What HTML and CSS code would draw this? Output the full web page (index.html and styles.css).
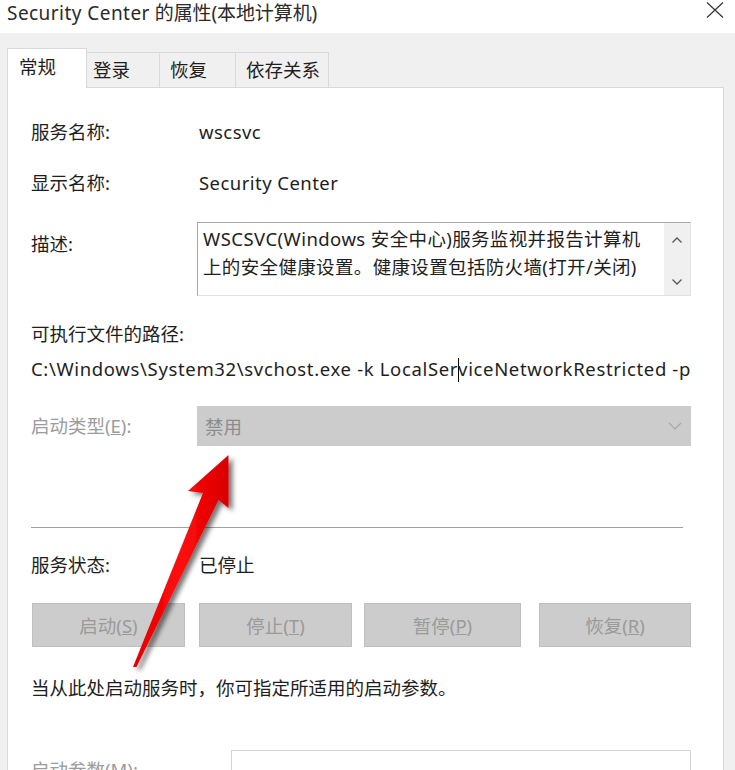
FILE: index.html
```html
<!DOCTYPE html>
<html lang="zh-CN">
<head>
<meta charset="utf-8">
<title>Security Center 的属性(本地计算机)</title>
<link rel="stylesheet" href="styles.css">
</head>
<body>
<div class="window">
  <div class="titlebar">
    <span class="title"><span class="lat">Security Center</span> 的属性(本地计算机)</span>
    <svg class="close" width="18" height="16" viewBox="0 0 18 16"><path d="M1 0.5 L17 15.5 M17 0.5 L1 15.5" stroke="#333" stroke-width="1.2" fill="none"/></svg>
  </div>
  <div class="dialog">
    <div class="tabs">
      <div class="tab active t1">常规</div>
      <div class="tab t2">登录</div>
      <div class="tab t3">恢复</div>
      <div class="tab t4">依存关系</div>
    </div>
    <div class="panel">
      <div class="row r-name"><span class="label">服务名称:</span><span class="value lat">wscsvc</span></div>
      <div class="row r-disp"><span class="label">显示名称:</span><span class="value lat">Security Center</span></div>
      <div class="row r-desc">
        <span class="label desc-label">描述:</span>
        <div class="descbox">
          <div class="desctext"><span class="lat">WSCSVC(Windows</span> 安全中心)服务监视并报告计算机<br>上的安全健康设置。健康设置包括防火墙(打开/关闭)</div>
          <div class="scroll">
            <svg width="12" height="8" viewBox="0 0 12 8"><path d="M1.5 6.5 L6 2 L10.5 6.5" stroke="#555" stroke-width="1.3" fill="none"/></svg>
            <svg width="12" height="8" viewBox="0 0 12 8"><path d="M1.5 1.5 L6 6 L10.5 1.5" stroke="#555" stroke-width="1.3" fill="none"/></svg>
          </div>
        </div>
      </div>
      <div class="pathlabel">可执行文件的路径:</div>
      <div class="path">C:\Windows\System32\svchost.exe -k LocalSer<span class="caret"></span>viceNetworkRestricted -p</div>
      <div class="row r-start">
        <span class="label disabled">启动类型(<u>E</u>):</span>
        <div class="select">
          <span>禁用</span>
          <svg width="14" height="8" viewBox="0 0 14 8"><path d="M1 1 L7 7 L13 1" stroke="#a8a8a8" stroke-width="1.2" fill="none"/></svg>
        </div>
      </div>
      <div class="sep"></div>
      <div class="row r-status"><span class="label">服务状态:</span><span class="value">已停止</span></div>
      <div class="buttons">
        <div class="btn b1">启动(<u>S</u>)</div>
        <div class="btn b2">停止(<u>T</u>)</div>
        <div class="btn b3">暂停(<u>P</u>)</div>
        <div class="btn b4">恢复(<u>R</u>)</div>
      </div>
      <div class="note">当从此处启动服务时，你可指定所适用的启动参数。</div>
      <div class="row r-param">
        <span class="label disabled">启动参数(<u>M</u>):</span>
        <div class="input"></div>
      </div>
    </div>
  </div>
  <svg class="arrow" width="735" height="770" viewBox="0 0 735 770">
    <defs>
      <filter id="sh" x="-50%" y="-50%" width="200%" height="200%">
        <feGaussianBlur in="SourceAlpha" stdDeviation="2.5"/>
        <feOffset dx="4" dy="3" result="b"/>
        <feComponentTransfer><feFuncA type="linear" slope="0.55"/></feComponentTransfer>
        <feMerge><feMergeNode/><feMergeNode in="SourceGraphic"/></feMerge>
      </filter>
      <linearGradient id="rg" x1="0" y1="0" x2="1" y2="0">
        <stop offset="0" stop-color="#e60000"/>
        <stop offset="0.5" stop-color="#ff0a0a"/>
        <stop offset="1" stop-color="#d80000"/>
      </linearGradient>
    </defs>
    <polygon filter="url(#sh)" fill="url(#rg)" points="133,667 203,493 188,491 228.5,455 228.5,508 218.5,500 136.5,667"/>
  </svg>
</div>
</body>
</html>
```

FILE: styles.css
```css
* { box-sizing: border-box; }
html, body {
  margin: 0;
  padding: 0;
}
body {
  width: 735px;
  height: 770px;
  overflow: hidden;
  background: #f0f0f0;
  font-family: "Noto Sans", "Noto Sans CJK SC", sans-serif;
  color: #1e1e1e;
}
.window {
  position: relative;
  width: 735px;
  height: 770px;
  overflow: hidden;
}
.lat { letter-spacing: 0.45px; }
.titlebar {
  height: 33px;
  background: #ffffff;
  display: flex;
  align-items: flex-start;
  justify-content: space-between;
  padding: 0 11px 0 7px;
}
.title {
  font-size: 19px;
  line-height: 26px;
  color: #2a2a2a;
  white-space: nowrap;
  letter-spacing: -0.1px;
}
.close {
  margin-top: 2px;
}
.dialog {
  padding: 15px 11px 0 7px;
}
.tabs {
  display: flex;
  align-items: flex-end;
  height: 39px;
  position: relative;
  z-index: 2;
}
.tab {
  height: 35px;
  border: 1px solid #d9d9d9;
  border-bottom: none;
  background: #f0f0f0;
  font-size: 18.5px;
  line-height: 33px;
  padding-left: 6px;
  color: #1e1e1e;
  margin-left: -1px;
  white-space: nowrap;
}
.tab.active {
  height: 40px;
  margin-bottom: -1px;
  background: #ffffff;
  line-height: 36px;
  padding-left: 11px;
  margin-left: 0;
}
.t1 { width: 80px; }
.t2 { width: 74px; }
.t3 { width: 77px; padding-left: 10px; }
.t4 { width: 94px; padding-left: 10px; }
.panel {
  background: #ffffff;
  border: 1px solid #d9d9d9;
  height: 700px;
  padding: 32px 32px 0 23px;
}
.row {
  display: flex;
  align-items: center;
}
.label {
  width: 166px;
  flex: none;
  font-size: 18.5px;
  line-height: 24px;
  white-space: nowrap;
}
.value {
  font-size: 18.5px;
  line-height: 24px;
  padding-left: 2px;
}
.disabled { color: #9c9c9c; }
.r-disp { margin-top: 27px; }
.r-desc {
  margin-top: 27px;
  align-items: flex-start;
}
.desc-label { margin-top: 10px; }
.descbox {
  width: 494px;
  height: 74px;
  border: 1px solid #a9a9a9;
  border-bottom-color: #e2e2e2;
  border-right-color: #e2e2e2;
  display: flex;
}
.desctext {
  flex: 1;
  font-size: 18.5px;
  line-height: 28px;
  padding: 2px 0 0 5px;
  white-space: nowrap;
  letter-spacing: 0.35px;
}
.scroll {
  width: 26px;
  background: #f0f0f0;
  display: flex;
  flex-direction: column;
  justify-content: space-between;
  align-items: center;
  padding: 13px 0 9px;
}
.pathlabel {
  margin-top: 26px;
  font-size: 18.5px;
  line-height: 24px;
}
.path {
  margin-top: 11px;
  font-size: 18.5px;
  line-height: 24px;
  white-space: nowrap;
  letter-spacing: 0.65px;
}
.caret {
  display: inline-block;
  width: 1px;
  height: 24px;
  background: #000;
  vertical-align: -6px;
  margin: 0 -1px 0 0;
}
.r-start { margin-top: 24px; }
.select {
  width: 495px;
  height: 40px;
  background: #cccccc;
  display: flex;
  align-items: center;
  justify-content: space-between;
  padding: 0 9px 0 8px;
  font-size: 18.5px;
  color: #8c8c8c;
}
.sep {
  margin-top: 81px;
  height: 1px;
  background: #a0a0a0;
  margin-right: 8px;
}
.r-status { margin-top: 25px; }
.buttons {
  margin-top: 26px;
  display: flex;
}
.btn {
  flex: none;
  height: 44px;
  background: #cccccc;
  border: 1px solid #c0c0c0;
  display: flex;
  align-items: center;
  justify-content: center;
  font-size: 18.5px;
  color: #9a9a9a;
}
.b1 { margin-left: 1px; width: 153px; }
.b2 { margin-left: 14px; width: 153px; }
.b3 { margin-left: 12px; width: 157px; }
.b4 { margin-left: 18px; width: 152px; }
.note {
  margin-top: 29px;
  font-size: 18.5px;
  line-height: 24px;
  white-space: nowrap;
}
.r-param { margin-top: 50px; align-items: center; }
.r-param .label { width: 200px; }
.input {
  width: 460px;
  height: 40px;
  border: 1px solid #d4d4d4;
  background: #fff;
}
.arrow {
  position: absolute;
  left: 0;
  top: 0;
  pointer-events: none;
}
```
